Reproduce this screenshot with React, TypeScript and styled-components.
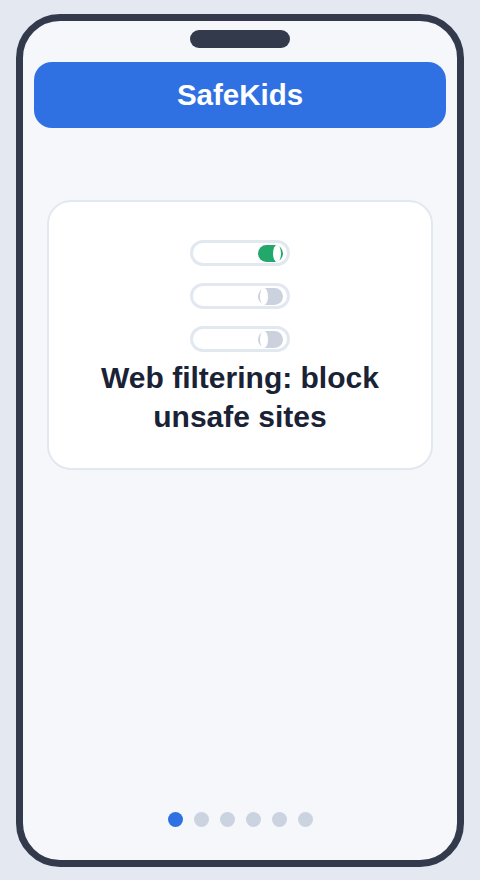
import styled, { createGlobalStyle } from "styled-components"

const GlobalStyle = createGlobalStyle`
  html, body {
    margin: 0;
    padding: 0;
    background: #e4e8f1;
    font-family: "Liberation Sans", Arial, sans-serif;
  }
`

const Page = styled.div`
  width: 480px;
  height: 880px;
  padding: 14px 16px 13px;
  box-sizing: border-box;
  background: #e4e8f1;
`

const Phone = styled.div`
  height: 100%;
  box-sizing: border-box;
  border: 7px solid #333a4b;
  border-radius: 44px;
  background: #f5f7fb;
  display: flex;
  flex-direction: column;
  align-items: center;
  padding: 9px 11px 33px;
`

const Notch = styled.div`
  width: 100px;
  height: 18px;
  border-radius: 9px;
  background: #333a4b;
`

const Header = styled.div`
  align-self: stretch;
  margin-top: 14px;
  height: 66px;
  border-radius: 18px;
  background: #2f70e3;
  color: #ffffff;
  font-size: 29.5px;
  font-weight: 700;
  display: flex;
  align-items: center;
  justify-content: center;
`

const Card = styled.div`
  align-self: stretch;
  margin: 72px 13px 0;
  box-sizing: border-box;
  height: 270px;
  background: #ffffff;
  border: 2px solid #e2e8f0;
  border-radius: 24px;
  padding-top: 38px;
  display: flex;
  flex-direction: column;
  align-items: center;
`

const Toggles = styled.div`
  display: flex;
  flex-direction: column;
  gap: 17px;
`

const Track = styled.div`
  width: 100px;
  height: 26px;
  box-sizing: border-box;
  border: 3px solid #e2e8f0;
  border-radius: 13px;
  background: #ffffff;
  display: flex;
  align-items: center;
  justify-content: flex-end;
  padding-right: 4px;
`

const Switch = styled.div<{ on: boolean }>`
  position: relative;
  width: 25px;
  height: 17px;
  border-radius: 9px;
  background: ${({ on }) => (on ? "#22a86b" : "#cbd2de")};
`

const Knob = styled.div<{ on: boolean }>`
  position: absolute;
  top: 0;
  ${({ on }) => (on ? "right: 2px;" : "left: 2px;")}
  width: 8px;
  height: 17px;
  border-radius: 50%;
  background: #ffffff;
`

const Title = styled.div`
  margin-top: 6px;
  font-size: 30px;
  line-height: 39px;
  font-weight: 700;
  color: #1a2236;
  text-align: center;
  width: 320px;
`

const Dots = styled.div`
  margin-top: auto;
  display: flex;
  gap: 11px;
`

const Dot = styled.div<{ active: boolean }>`
  width: 15px;
  height: 15px;
  border-radius: 50%;
  background: ${({ active }) => (active ? "#2f70e3" : "#cbd3e0")};
`

const toggles = [true, false, false]

export default function App() {
  return (
    <>
      <GlobalStyle />
      <Page>
        <Phone>
          <Notch />
          <Header>SafeKids</Header>
          <Card>
            <Toggles>
              {toggles.map((on, i) => (
                <Track key={i}>
                  <Switch on={on}>
                    <Knob on={on} />
                  </Switch>
                </Track>
              ))}
            </Toggles>
            <Title>Web filtering: block unsafe sites</Title>
          </Card>
          <Dots>
            {[0, 1, 2, 3, 4, 5].map((i) => (
              <Dot key={i} active={i === 0} />
            ))}
          </Dots>
        </Phone>
      </Page>
    </>
  )
}
